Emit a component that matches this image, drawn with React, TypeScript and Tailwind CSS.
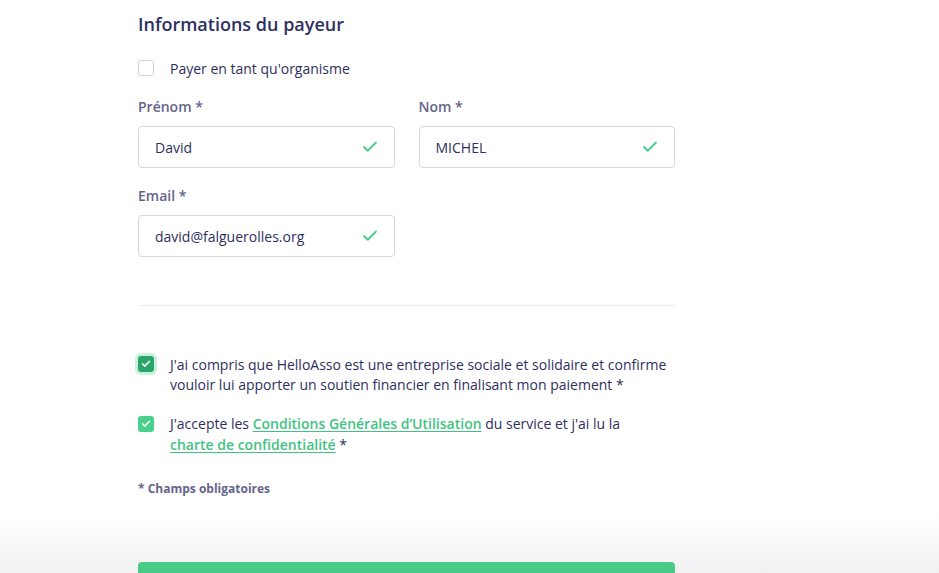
import { Check } from "lucide-react";

function Field({ label, value }: { label: string; value: string }) {
  return (
    <div className="flex flex-col">
      <label className="text-[14px] leading-[20px] font-semibold text-[#64648a]">{label}</label>
      <div className="mt-[9px] h-[42px] flex items-center justify-between border border-[#d5d6e0] rounded-[4px] pl-4 pr-[15px]">
        <span className="text-[14px] text-[#2e2f5e]">{value}</span>
        <Check className="w-[18px] h-[18px] text-[#49d08a]" strokeWidth={2.5} />
      </div>
    </div>
  );
}

function Box({ variant }: { variant: "empty" | "focus" | "checked" }) {
  if (variant === "empty") {
    return <span className="block w-4 h-4 rounded-[3px] border border-[#cfd0dc] bg-white" />;
  }
  return (
    <span
      className={
        "flex items-center justify-center w-4 h-4 rounded-[3px] " +
        (variant === "focus" ? "bg-[#2aa56a] ring-[3px] ring-[#c9f1dc]" : "bg-[#49d08a]")
      }
    >
      <Check className="w-[10px] h-[10px] text-white" strokeWidth={4} />
    </span>
  );
}

export default function App() {
  return (
    <div className="w-full min-h-[573px] bg-white text-[#2e2f5e]" style={{ fontFamily: '"Open Sans", sans-serif' }}>
      <div className="ml-[138px] w-[537px]">
        <h2 className="pt-[10px] text-[18px] leading-[28px] font-semibold">Informations du payeur</h2>

        <div className="mt-[20px] h-[20px] flex items-center gap-4">
          <Box variant="empty" />
          <span className="text-[14px]">Payer en tant qu'organisme</span>
        </div>

        <div className="mt-[19px] grid grid-cols-2 gap-x-6">
          <Field label="Prénom *" value="David" />
          <Field label="Nom *" value="MICHEL" />
        </div>
        <div className="mt-[18px] grid grid-cols-2 gap-x-6">
          <Field label="Email *" value="david@falguerolles.org" />
        </div>

        <div className="mt-[48px] h-px bg-[#ececf0]" />

        <div className="mt-[49px] flex gap-4">
          <div className="pt-[1px]">
            <Box variant="focus" />
          </div>
          <p className="text-[14px] leading-[20px]">
            J'ai compris que HelloAsso est une entreprise sociale et solidaire et confirme vouloir lui apporter un soutien financier en finalisant mon paiement *
          </p>
        </div>

        <div className="mt-[18px] flex gap-4">
          <div className="pt-[3px]">
            <Box variant="checked" />
          </div>
          <p className="text-[14px] leading-[21px]">
            J'accepte les{" "}
            <a className="font-semibold text-[#3fc383] underline underline-offset-2">Conditions Générales d’Utilisation</a>{" "}
            du service et j'ai lu la{" "}
            <a className="whitespace-nowrap font-semibold text-[#3fc383] underline underline-offset-2">charte de confidentialité</a> *
          </p>
        </div>

        <p className="mt-[26px] text-[12px] leading-[16px] font-bold text-[#64648a]">* Champs obligatoires</p>
      </div>

      <div className="mt-[18px] h-[58px] bg-gradient-to-b from-white to-[#f1f1f4] pt-[47px]">
        <div className="ml-[138px] w-[537px] h-[11px] rounded-t-[4px] bg-[#49cb86]" />
      </div>
    </div>
  );
}
